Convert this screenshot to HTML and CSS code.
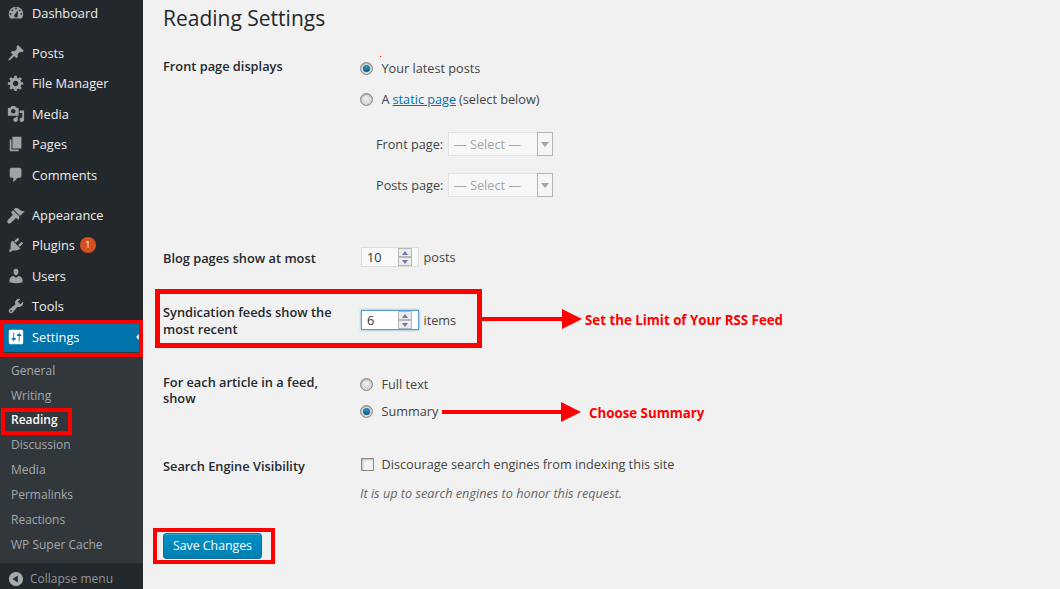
FILE: index.html
```html
<!DOCTYPE html>
<html lang="en">
<head>
<meta charset="utf-8">
<title>Reading Settings</title>
<link rel="stylesheet" href="styles.css">
</head>
<body>
<div class="page">
  <aside class="sidebar">
    <nav class="menu">
      <a class="item"><svg class="ico" viewBox="0 0 20 20"><path fill-rule="evenodd" d="M3.76 16h12.48c1.1-1.37 1.76-3.11 1.76-5 0-4.42-3.58-8-8-8s-8 3.58-8 8c0 1.89.66 3.63 1.76 5zM10 4c.55 0 1 .45 1 1s-.45 1-1 1-1-.45-1-1 .45-1 1-1zM6 6c.55 0 1 .45 1 1s-.45 1-1 1-1-.45-1-1 .45-1 1-1zm8 0c.55 0 1 .45 1 1s-.45 1-1 1-1-.45-1-1 .45-1 1-1zm-5.37 5.55L12 7v6c0 1.1-.9 2-2 2s-2-.9-2-2c0-.57.24-1.08.63-1.45zM4 10c.55 0 1 .45 1 1s-.45 1-1 1-1-.45-1-1 .45-1 1-1zm12 0c.55 0 1 .45 1 1s-.45 1-1 1-1-.45-1-1 .45-1 1-1z"/></svg>Dashboard</a>
      <div class="sep"></div>
      <a class="item"><svg class="ico" viewBox="0 0 20 20"><path d="M10.44 3.02l1.82-1.82 6.36 6.35-1.83 1.82c-1.05-.68-2.48-.57-3.41.36l-.75.75c-.92.93-1.04 2.35-.35 3.41l-1.83 1.82-2.41-2.41-2.8 2.79c-.42.42-3.38 2.71-3.8 2.29s1.86-3.39 2.28-3.81l2.79-2.79L4.1 9.36l1.83-1.82c1.05.69 2.48.57 3.4-.36l.75-.75c.93-.92 1.05-2.35.36-3.41z"/></svg>Posts</a>
      <a class="item"><svg class="ico" viewBox="0 0 20 20"><path fill-rule="evenodd" d="M18 12h-2.18c-.17.7-.44 1.35-.81 1.93l1.54 1.54-2.1 2.1-1.54-1.54c-.58.36-1.23.63-1.91.79V19H8v-2.18c-.68-.16-1.33-.43-1.91-.79l-1.54 1.54-2.12-2.12 1.54-1.54c-.36-.58-.63-1.23-.79-1.91H1V9.03h2.17c.16-.7.44-1.35.8-1.94L2.43 5.55l2.1-2.1 1.54 1.54c.58-.37 1.24-.64 1.93-.81V2h3v2.18c.68.16 1.33.43 1.91.79l1.54-1.54 2.12 2.12-1.54 1.54c.36.59.64 1.24.8 1.94H18V12zm-8.5 1.5c1.66 0 3-1.34 3-3s-1.34-3-3-3-3 1.34-3 3 1.34 3 3 3z"/></svg>File Manager</a>
      <a class="item"><svg class="ico" viewBox="0 0 20 20"><path fill-rule="evenodd" d="M13 11V4c0-.55-.45-1-1-1h-1.67L9 1H5L3.67 3H2c-.55 0-1 .45-1 1v7c0 .55.45 1 1 1h10c.55 0 1-.45 1-1zM7 4.5c1.38 0 2.5 1.12 2.5 2.5S8.38 9.5 7 9.5 4.5 8.38 4.5 7 5.62 4.5 7 4.5zM14 6h5v10.5c0 1.38-1.12 2.5-2.5 2.5S14 17.88 14 16.5s1.12-2.5 2.5-2.5c.17 0 .34.02.5.05V9h-3V6zm-4 8.05V13h2v3.5c0 1.38-1.12 2.5-2.5 2.5S7 17.88 7 16.5 8.12 14 9.5 14c.17 0 .34.02.5.05z"/></svg>Media</a>
      <a class="item"><svg class="ico" viewBox="0 0 20 20"><path d="M6 15V2h10v13H6zm-1 1h8v2H3V5h2v11z"/></svg>Pages</a>
      <a class="item"><svg class="ico" viewBox="0 0 20 20"><path d="M5 2h9c1.1 0 2 .9 2 2v7c0 1.1-.9 2-2 2h-2l-5 5v-5H5c-1.1 0-2-.9-2-2V4c0-1.1.9-2 2-2z"/></svg>Comments</a>
      <div class="sep"></div>
      <a class="item"><svg class="ico" viewBox="0 0 20 20"><path d="M14.48 11.06L7.41 3.99l1.5-1.5c.5-.56 2.3-.47 3.51.32 1.21.8 1.43 1.28 2.91 2.1 1.18.64 2.45 1.26 4.45.85zm-.71.71L6.7 4.7 4.93 6.47c-.39.39-.39 1.02 0 1.41l1.06 1.06c.39.39.39 1.03 0 1.42l-5 5.2c-.9.9-.9 2.3 0 3.2s2.3.9 3.2 0l5.2-5c.39-.39 1.03-.39 1.42 0l1.06 1.06c.39.39 1.02.39 1.41 0z"/></svg>Appearance</a>
      <a class="item"><svg class="ico" viewBox="0 0 20 20"><path d="M13.11 4.36L9.87 7.6 8 5.73l3.24-3.24c.35-.34 1.05-.2 1.56.32.52.51.66 1.21.31 1.55zm-8 1.77l.91-1.12 9.01 9.01-1.19.84c-.71.71-2.63 1.16-3.82 1.16H6.14L4.9 17.26c-.59.59-1.54.59-2.12 0-.59-.58-.59-1.53 0-2.12l1.24-1.24v-3.88c0-1.13.4-3.19 1.09-3.89zm7.26 3.97l3.24-3.24c.34-.35 1.04-.21 1.55.31.52.51.66 1.21.31 1.55l-3.24 3.25z"/></svg>Plugins<span class="badge">1</span></a>
      <a class="item"><svg class="ico" viewBox="0 0 20 20"><path d="M10 9.25c-2.27 0-2.73-3.44-2.73-3.44C7 4.02 7.82 2 9.97 2c2.16 0 2.98 2.02 2.71 3.81 0 0-.41 3.44-2.68 3.44zm0 2.57L12.72 10c2.39 0 4.52 2.33 4.52 4.53v2.49s-3.65 1.13-7.24 1.13c-3.65 0-7.24-1.13-7.24-1.13v-2.49c0-2.25 1.94-4.48 4.47-4.48z"/></svg>Users</a>
      <a class="item"><svg class="ico" viewBox="0 0 20 20"><path fill-rule="evenodd" d="M16.68 9.77c-1.34 1.34-3.3 1.67-4.95.99l-5.41 6.52c-.99.99-2.59.99-3.58 0s-.99-2.59 0-3.57l6.52-5.42c-.68-1.65-.35-3.61.99-4.95 1.28-1.28 3.12-1.62 4.72-1.06l-2.89 2.89 2.82 2.82 2.86-2.87c.53 1.58.18 3.39-1.08 4.65zM3.81 16.21c.4.39 1.04.39 1.43 0 .4-.4.4-1.04 0-1.43-.39-.4-1.03-.4-1.43 0-.39.39-.39 1.03 0 1.43z"/></svg>Tools</a>
      <a class="item current"><svg class="ico" viewBox="0 0 20 20"><path fill-rule="evenodd" d="M18 16V4c0-1.1-.9-2-2-2H4c-1.1 0-2 .9-2 2v12c0 1.1.9 2 2 2h12c1.1 0 2-.9 2-2zM8 11h1c.55 0 1 .45 1 1s-.45 1-1 1H8v1.5c0 .28-.22.5-.5.5s-.5-.22-.5-.5V13H6c-.55 0-1-.45-1-1s.45-1 1-1h1V5.5c0-.28.22-.5.5-.5s.5.22.5.5V11zm5-2h-1c-.55 0-1-.45-1-1s.45-1 1-1h1V5.5c0-.28.22-.5.5-.5s.5.22.5.5V7h1c.55 0 1 .45 1 1s-.45 1-1 1h-1v5.5c0 .28-.22.5-.5.5s-.5-.22-.5-.5V9z"/></svg>Settings<span class="caret"></span></a>
    </nav>
    <div class="submenu">
      <a class="subitem">General</a>
      <a class="subitem">Writing</a>
      <a class="subitem active">Reading</a>
      <a class="subitem">Discussion</a>
      <a class="subitem">Media</a>
      <a class="subitem">Permalinks</a>
      <a class="subitem">Reactions</a>
      <a class="subitem">WP Super Cache</a>
    </div>
    <div class="collapse"><svg class="ico ico-collapse" viewBox="0 0 20 20"><path fill-rule="evenodd" d="M10 2.16c4.33 0 7.84 3.51 7.84 7.84s-3.51 7.84-7.84 7.84S2.16 14.33 2.16 10 5.71 2.16 10 2.16zm2 11.72V6.12L6.18 9.97z"/></svg>Collapse menu</div>
  </aside>

  <main class="content">
    <h1 class="title">Reading Settings</h1>

    <section class="row row-front">
      <div class="label">Front page displays</div>
      <div class="field">
        <label class="choice"><span class="radio on"></span>Your latest posts</label>
        <label class="choice"><span class="radio"></span>A <a class="link">static page</a> (select below)</label>
        <div class="pick pick-first"><span class="pick-label">Front page:</span><span class="select"><span class="select-text">— Select —</span><span class="select-btn"></span></span></div>
        <div class="pick"><span class="pick-label">Posts page:</span><span class="select"><span class="select-text">— Select —</span><span class="select-btn"></span></span></div>
      </div>
    </section>

    <section class="row row-blog">
      <div class="label">Blog pages show at most</div>
      <div class="field inline">
        <span class="number"><span class="number-val">10</span><span class="spin"><i class="up"></i><i class="down"></i></span></span>posts
      </div>
    </section>

    <section class="row row-feed">
      <div class="label">Syndication feeds show the most recent</div>
      <div class="field inline">
        <span class="number focus"><span class="number-val">6</span><span class="spin"><i class="up"></i><i class="down"></i></span></span>items
      </div>
    </section>

    <section class="row row-article">
      <div class="label label-tight">For each article in a feed, show</div>
      <div class="field">
        <label class="choice choice-tight"><span class="radio"></span>Full text</label>
        <label class="choice choice-tight"><span class="radio on"></span>Summary</label>
      </div>
    </section>

    <section class="row row-search">
      <div class="label">Search Engine Visibility</div>
      <div class="field">
        <label class="choice choice-check"><span class="check"></span>Discourage search engines from indexing this site</label>
        <p class="desc">It is up to search engines to honor this request.</p>
      </div>
    </section>

    <button class="save" type="button">Save Changes</button>
  </main>

  <div class="mark box-settings"></div>
  <div class="mark box-reading"></div>
  <div class="mark box-feed"></div>
  <div class="mark box-save"></div>
  <div class="dot"></div>
  <div class="arrow arrow-feed"><span class="shaft"></span><span class="head"></span></div>
  <div class="arrow arrow-summary"><span class="shaft"></span><span class="head"></span></div>
  <div class="note note-feed">Set the Limit of Your RSS Feed</div>
  <div class="note note-summary">Choose Summary</div>
</div>
</body>
</html>
```
FILE: styles.css
```css
* { box-sizing: border-box; }
html, body { margin: 0; height: 100%; overflow: hidden; }
body { background: #f1f1f1; font-family: "Open Sans", sans-serif; font-size: 12.7px; color: #444; }
.page { position: relative; display: flex; width: 1060px; height: 589px; overflow: hidden; }

/* Sidebar */
.sidebar { width: 143px; height: 589px; flex: none; background: #23282d; display: flex; flex-direction: column; }
.menu { margin-top: -2.5px; }
.sep { height: 10px; }
.item { position: relative; display: flex; align-items: center; height: 30.4px; color: #eee; font-size: 12.8px; }
.ico { width: 18px; height: 18px; margin-left: 7px; margin-right: 7px; flex: none; fill: #9ea3a8; }
.current { background: #0073aa; color: #fff; }
.current .ico { fill: #fff; }
.caret { position: absolute; right: 2px; top: 50%; margin-top: -5px; border: 5px solid transparent; border-right-color: #f1f1f1; border-left-width: 0; }
.badge { width: 16px; height: 16px; margin-left: 5px; border-radius: 50%; background: #d54e21; color: #fff; font-size: 9px; line-height: 16px; text-align: center; }
.submenu { flex: none; background: #32373c; padding: 7px 0 5.3px; }
.subitem { display: block; height: 24.85px; line-height: 24.85px; padding-left: 11px; font-size: 12px; color: #a4a9ad; }
.active { color: #fff; font-weight: 600; }
.collapse { flex: none; display: flex; align-items: center; height: 32px; color: #8f9498; font-size: 12px; }
.ico-collapse { fill: #a4a9ad; margin-left: 7px; margin-right: 5px; }

/* Content */
.content { flex: 1; padding-left: 20px; min-width: 0; }
.title { margin: 3px 0 0; font-size: 21px; font-weight: 400; line-height: 30px; color: #23282d; }
.row { display: grid; grid-template-columns: 197px 1fr; }
.label { font-weight: 600; font-size: 12.8px; color: #23282d; line-height: 17px; width: 175px; }
.label-tight { line-height: 16px; }
.row-front { margin-top: 24.5px; }
.row-front .field { margin-top: .5px; }
.row-front .choice { margin-bottom: 11px; }
.row-front .pick-first { margin-top: 23px; }
.row-blog { margin-top: 50px; }
.row-blog .label { margin-top: 2.5px; }
.row-feed { margin-top: 36.5px; }
.row-feed .field { margin-top: 6.5px; }
.row-article { margin-top: 36.5px; }
.row-article .field { margin-top: 0; }
.row-search { margin-top: 30px; }
.row-search .field { margin-top: -4px; }
.field { color: #444; }
.inline { display: flex; align-items: center; height: 20px; }
.choice { display: flex; align-items: center; height: 20px; margin: 0 0 10.5px; }
.row-front .radio { margin-top: 1px; }
.choice-tight { margin-bottom: 7px; }
.row-search .choice-check { margin-bottom: 8.5px; }
.radio { position: relative; width: 13px; height: 13px; margin-right: 8.5px; flex: none; border-radius: 50%; border: 1px solid #858585; background: radial-gradient(circle at 50% 40%, #f2f2f2, #c4c4c4); box-shadow: inset 0 1px 1px #aaa; }
.radio.on::after { content: ""; position: absolute; left: 2px; top: 2px; width: 7px; height: 7px; border-radius: 50%; background: radial-gradient(circle at 50% 30%, #2a9ad0, #0b3f60); }
.check { width: 13px; height: 13px; margin: 1px 8px 0 .5px; flex: none; border: 1px solid #8c8c8c; background: #f4f4f4; box-shadow: inset 1px 1px 2px #bbb; }
.link { color: #0073aa; text-decoration: underline; margin: 0 3px; }
.pick { display: flex; align-items: center; height: 24px; margin-left: 16px; margin-top: 17px; }
.pick-label { width: 72px; flex: none; white-space: nowrap; }
.select { position: relative; display: flex; width: 105px; height: 24px; background: #f7f7f7; border: 1px solid #e3e3e3; color: #a5a5a5; align-items: center; }
.select-text { flex: 1; padding-left: 5px; }
.select-btn { display: block; width: 16px; height: 24px; margin: -1px -1px -1px 0; flex: none; background: #f5f5f5; border: 1px solid #b4b4b4; position: relative; }
.select-btn::after { content: ""; position: absolute; left: 3px; top: 9px; border: 4px solid transparent; border-top: 5px solid #a5a5a5; border-bottom-width: 0; }
.number { position: relative; display: flex; align-items: center; width: 58px; height: 20px; margin: 0 4.5px 0 1px; background: #f9f9f9; border: 1px solid #ddd; color: #333; flex: none; }
.number-val { flex: 1; padding-left: 5px; }
.focus { background: #fff; border-color: #5b9dd9; box-shadow: 0 0 2px rgba(30,140,190,.8); }
.spin { display: flex; flex-direction: column; width: 14px; height: 18px; margin-right: 6px; flex: none; }
.spin i { position: relative; flex: 1; background: #ececec; border: 1px solid #b8b8b8; }
.spin i::after { content: ""; position: absolute; left: 2.5px; border: 3.5px solid transparent; }
.spin .up::after { top: 2px; border-bottom: 4px solid #6a79b0; border-top-width: 0; }
.spin .down::after { top: 2px; border-top: 4px solid #6a79b0; border-bottom-width: 0; }
.desc { margin: 0; font-style: italic; color: #666; line-height: 20px; }
.save { display: block; width: 99px; height: 26px; margin-top: 30px; padding: 0; border: 1px solid #0074a2; border-radius: 3px; background: linear-gradient(#0091c4, #007fb1); box-shadow: inset 0 1px 0 rgba(120,200,230,.5); color: #fff; font: 12.3px "Open Sans", sans-serif; }

/* Annotations laid over the screenshot */
.mark { position: absolute; border: 4px solid #f00; }
.box-settings { left: 0; top: 320px; width: 143px; height: 37px; }
.box-reading { left: 1px; top: 408px; width: 71px; height: 27px; }
.box-feed { left: 155px; top: 289px; width: 327px; height: 59px; border-width: 5px; }
.box-save { left: 153px; top: 528px; width: 122px; height: 36px; }
.dot { position: absolute; left: 380px; top: 56px; width: 1px; height: 1px; background: #f00; }
.arrow { position: absolute; display: flex; align-items: center; height: 20px; }
.arrow-feed { left: 482px; top: 309px; width: 100px; }
.arrow-feed .shaft { width: 80px; height: 4px; background: #f00; }
.arrow-summary { left: 442px; top: 402px; width: 139px; }
.arrow-summary .shaft { width: 119px; height: 4px; background: #f00; }
.head { width: 0; height: 0; border-left: 20px solid #f00; border-top: 10px solid transparent; border-bottom: 10px solid transparent; }
.note { position: absolute; color: #f00; font-weight: 700; font-size: 13.3px; line-height: 20px; white-space: nowrap; }
.note-feed { left: 585px; top: 310px; }
.note-summary { left: 589px; top: 403px; }
```
